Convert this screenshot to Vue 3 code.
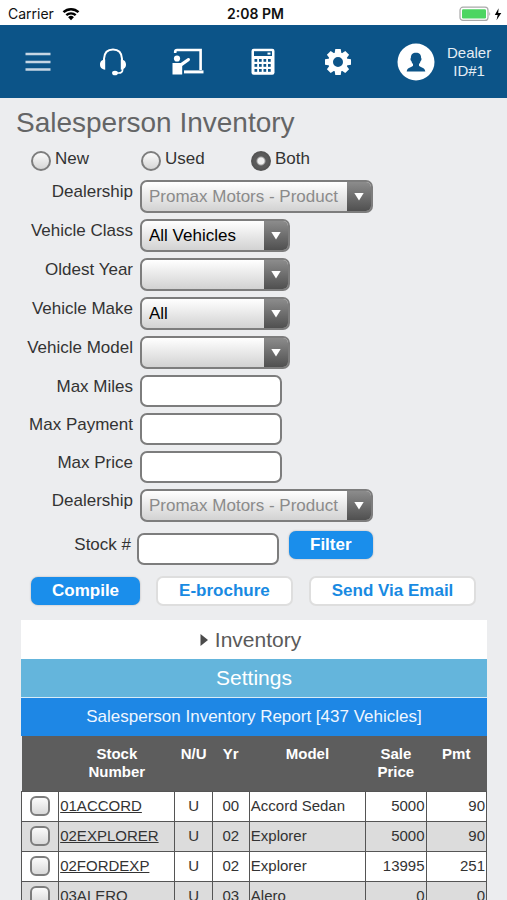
<script setup>
import { ref } from 'vue'

const condition = ref('Both')
const conditions = ['New', 'Used', 'Both']

const fields = [
  { id: 'dealership', label: 'Dealership', type: 'select', value: 'Promax Motors - Product', wide: true, disabled: true },
  { id: 'vehicle-class', label: 'Vehicle Class', type: 'select', value: 'All Vehicles' },
  { id: 'oldest-year', label: 'Oldest Year', type: 'select', value: '' },
  { id: 'vehicle-make', label: 'Vehicle Make', type: 'select', value: 'All' },
  { id: 'vehicle-model', label: 'Vehicle Model', type: 'select', value: '' },
  { id: 'max-miles', label: 'Max Miles', type: 'text' },
  { id: 'max-payment', label: 'Max Payment', type: 'text' },
  { id: 'max-price', label: 'Max Price', type: 'text' },
  { id: 'dealership-filter', label: 'Dealership', type: 'select', value: 'Promax Motors - Product', wide: true, disabled: true },
]

const vehicles = [
  { stock: '01ACCORD', nu: 'U', yr: '00', model: 'Accord Sedan', price: 5000, pmt: 90 },
  { stock: '02EXPLORER', nu: 'U', yr: '02', model: 'Explorer', price: 5000, pmt: 90 },
  { stock: '02FORDEXP', nu: 'U', yr: '02', model: 'Explorer', price: 13995, pmt: 251 },
  { stock: '03ALERO', nu: 'U', yr: '03', model: 'Alero', price: 0, pmt: 0 },
]

const gearTeeth = [0, 45, 90, 135, 180, 225, 270, 315]
const keyColumns = [4, 8.5, 13, 17.5]
const keyRows = [11, 16, 21]
</script>

<template>
  <div class="screen">
    <div class="status">
      <div class="carrier">
        <span>Carrier</span>
        <svg width="18" height="14" viewBox="0 0 18 14" aria-hidden="true">
          <path d="M1.5 5.2a10.8 10.8 0 0 1 15 0" fill="none" stroke="#000" stroke-width="2.5" />
          <path d="M4.3 8.2a6.8 6.8 0 0 1 9.4 0" fill="none" stroke="#000" stroke-width="2.3" />
          <path d="M9 13.2 6.1 10.3a4.1 4.1 0 0 1 5.8 0z" />
        </svg>
      </div>
      <span class="time">2:08 PM</span>
      <div class="power">
        <svg width="44" height="16" viewBox="0 0 44 16" aria-hidden="true">
          <rect x="1" y="1.2" width="28" height="13.2" rx="3" fill="#fff" stroke="#a9a9a9" stroke-width="1.2" />
          <rect x="3" y="3.2" width="24" height="9.2" rx="1.2" fill="#4cd562" />
          <path d="M30.3 5.4q1.8 2.2 0 4.6z" fill="#a9a9a9" />
          <path d="M39.6 2.2 35.8 9h2.9l-1.2 5.2 4.8-7.3h-3.1z" />
        </svg>
      </div>
    </div>

    <nav class="toolbar">
      <button class="tool" type="button" aria-label="Menu">
        <svg width="26" height="20" viewBox="0 0 26 20">
          <path d="M.5 2h25M.5 10h25M.5 17.500h25" stroke="#c6d6e4" stroke-width="2.300" />
        </svg>
      </button>
      <button class="tool" type="button" aria-label="Support">
        <svg width="28" height="28" viewBox="0 0 28 28">
          <path d="M5 13V10.800Q5.500 1.500 14 1.500T23 10.800V13" fill="none" stroke="#fff" stroke-width="2" />
          <path d="M6.200 11.500v10.200C2.500 21.500 1 19.300 1 16.600s1.500-4.900 5.200-5.100zM21.800 11.500v10.200c3.700-.2 5.200-2.400 5.200-5.100s-1.500-4.900-5.200-5.100z" fill="#fff" />
          <path d="M23.600 20v1.400q0 3.600-4 3.600H17" fill="none" stroke="#fff" stroke-width="1.700" />
          <ellipse cx="16" cy="25" rx="2.900" ry="2.300" fill="#fff" />
        </svg>
      </button>
      <button class="tool" type="button" aria-label="Training">
        <svg width="32" height="28" viewBox="0 0 32 28">
          <path d="M3.200 5V3.700Q3.200 2 5 2H28.600V22" fill="none" stroke="#fff" stroke-width="2.600" />
          <circle cx="5" cy="10.500" r="3.100" fill="#fff" />
          <path d="M.5 15h8.200l6.900-4.700q1.500-.8 2.200.4t-.6 2.200l-7 5.200v8.400H.5z" fill="#fff" />
          <path d="M12 22.400h19.500v3H12z" fill="#fff" />
        </svg>
      </button>
      <button class="tool" type="button" aria-label="Calculator">
        <svg width="24" height="28" viewBox="0 0 24 28">
          <rect x=".5" y=".8" width="23" height="26" rx="2.200" fill="#fff" />
          <rect x="3" y="3.200" width="18" height="4.800" fill="#0c5488" />
          <path d="M16.500 4.600h3v2h-3z" fill="#fff" />
          <template v-for="y in keyRows" :key="y">
            <rect v-for="x in keyColumns" :key="x" :x="x - .5" :y="y" width="2.700" height="2.800" fill="#0c5488" />
          </template>
        </svg>
      </button>
      <button class="tool" type="button" aria-label="Settings">
        <svg width="28" height="28" viewBox="-14 -14 28 28">
          <circle r="7.400" fill="none" stroke="#fff" stroke-width="4.800" />
          <path v-for="angle in gearTeeth" :key="angle" d="M-3.500-8-2.700-13h5.400L3.500-8z" fill="#fff" :transform="`rotate(${angle})`" />
        </svg>
      </button>
      <a class="account" href="#account">
        <svg width="38" height="38" viewBox="0 0 38 38" aria-hidden="true">
          <circle cx="19" cy="19" r="18.500" fill="#fff" />
          <path d="M19 9.800c3.300 0 5.200 1.900 5.100 5.200.8.500.4 2.600-.5 3-.3 1.600-1 2.500-1.600 3.100v1.700c1.200 1.700 6 1.700 6.300 5.700H9.700c.3-4 5.100-4 6.300-5.700v-1.700c-.6-.6-1.300-1.500-1.600-3.100-.9-.4-1.300-2.500-.5-3-.1-3.300 1.800-5.200 5.100-5.200z" fill="#0c5488" />
        </svg>
        <span class="dealer">Dealer<br>ID#1</span>
      </a>
    </nav>

    <main class="page">
      <h1>Salesperson Inventory</h1>

      <form @submit.prevent>
        <div class="conditions">
          <label v-for="name in conditions" :key="name" class="condition">
            <input v-model="condition" type="radio" name="condition" :value="name">
            <span>{{ name }}</span>
          </label>
        </div>

        <div class="fields">
          <div v-for="field in fields" :key="field.id" class="field">
            <label :for="field.id">{{ field.label }}</label>
            <div v-if="field.type === 'select'" class="picker" :class="{ wide: field.wide }">
              <select :id="field.id" :disabled="field.disabled">
                <option>{{ field.value }}</option>
              </select>
              <span class="arrow"></span>
            </div>
            <input v-else :id="field.id" class="entry" type="text">
          </div>
        </div>

        <div class="stock">
          <label for="stock-number">Stock #</label>
          <input id="stock-number" class="entry" type="text">
          <button class="action primary filter" type="submit">Filter</button>
        </div>

        <div class="actions">
          <button class="action primary" type="button">Compile</button>
          <button class="action" type="button">E-brochure</button>
          <button class="action" type="button">Send Via Email</button>
        </div>
      </form>

      <section class="report">
        <button class="bar inventory" type="button">
          <svg width="8" height="12" viewBox="0 0 8 12" aria-hidden="true"><path d="M.5 0 8 6 .5 12z" fill="#4b4b4b" /></svg>
          Inventory
        </button>
        <button class="bar settings" type="button">Settings</button>
        <h2>Salesperson Inventory Report [437 Vehicles]</h2>
        <table>
          <colgroup>
            <col class="c-check"><col class="c-text"><col class="c-short"><col class="c-short">
            <col class="c-text"><col class="c-number"><col class="c-number">
          </colgroup>
          <thead>
            <tr>
              <th></th>
              <th>Stock<br>Number</th>
              <th>N/U</th>
              <th>Yr</th>
              <th>Model</th>
              <th>Sale<br>Price</th>
              <th>Pmt</th>
            </tr>
          </thead>
          <tbody>
            <tr v-for="v in vehicles" :key="v.stock">
              <td class="mid"><input type="checkbox" :aria-label="v.stock"></td>
              <td><a :href="'#' + v.stock">{{ v.stock }}</a></td>
              <td class="mid">{{ v.nu }}</td>
              <td class="mid">{{ v.yr }}</td>
              <td>{{ v.model }}</td>
              <td class="num">{{ v.price }}</td>
              <td class="num">{{ v.pmt }}</td>
            </tr>
          </tbody>
        </table>
      </section>
    </main>
  </div>
</template>

<style>
body {
  background: #ecedef;
}
</style>

<style scoped>
.screen {
  display: flex;
  flex-direction: column;
  height: 100vh;
  color: #333;
  background: #ecedef;
  font-family: "Liberation Sans", Arial, sans-serif;
  font-size: 17px;
  line-height: 24px;
}

.screen * {
  box-sizing: border-box;
}

button,
input,
select {
  margin: 0;
  padding: 0;
  border: 0;
  font: inherit;
  appearance: none;
}

svg {
  display: block;
  flex: none;
}

.status {
  display: grid;
  grid-template-columns: 1fr auto 1fr;
  align-items: center;
  flex: none;
  height: 25px;
  padding: 2px 4px 0 8px;
  color: #111;
  background: #fff;
  font-family: Inter, sans-serif;
  font-size: 14px;
}

.carrier {
  display: flex;
  align-items: center;
  gap: 8px;
}

.time {
  font-weight: 600;
}

.power {
  display: flex;
  justify-content: flex-end;
}

.toolbar {
  display: grid;
  grid-template-columns: repeat(5, 75fr) 132fr;
  flex: none;
  height: 73px;
  background: #0c5488;
}

.tool {
  display: flex;
  align-items: center;
  justify-content: center;
  background: none;
}

.account {
  display: flex;
  align-items: center;
  gap: 12px;
  padding-left: 22px;
  color: #e4edf5;
  text-decoration: none;
}

.dealer {
  font-size: 15px;
  line-height: 18px;
  text-align: center;
}

.page {
  flex: 1;
  min-height: 0;
  overflow-y: auto;
  scrollbar-width: none;
}

h1 {
  margin: 0;
  padding-left: 16px;
  color: #646566;
  font-size: 28px;
  font-weight: 400;
  line-height: 49px;
}

.conditions {
  display: flex;
  height: 33px;
  padding-left: 31px;
}

.condition {
  display: flex;
  gap: 4px;
  width: 110px;
}

.condition input {
  width: 20px;
  height: 20px;
  margin-top: 4px;
  border: 2px solid #7d7d7d;
  border-radius: 50%;
  background: linear-gradient(#fafafa, #d6d6d6);
}

.condition input:checked {
  border-color: #555;
  background: radial-gradient(circle, #eee 3px, #5b5b5b 5px);
}

.fields {
  display: flex;
  flex-direction: column;
  gap: 6px;
}

.field {
  display: flex;
  align-items: flex-start;
  gap: 7px;
}

.field label {
  width: 133px;
  text-align: right;
}

.picker {
  display: grid;
  grid-template-columns: 1fr 24px;
  width: 150px;
  height: 33px;
  overflow: hidden;
  border: 2px solid #7d7d7d;
  border-radius: 7px;
  background: linear-gradient(#fff, #d2d2d2);
}

.picker.wide {
  width: 233px;
}

.picker select {
  grid-area: 1 / 1 / 2 / 3;
  padding: 0 24px 0 7px;
  color: #000;
  background: none;
}

.picker select:disabled {
  color: #8b8b8b;
  opacity: 1;
}

.arrow {
  display: grid;
  grid-area: 1 / 2 / 2 / 3;
  place-items: center;
  background: linear-gradient(#8c8c8c, #505050);
  pointer-events: none;
}

.arrow::after {
  width: 10px;
  height: 8px;
  background: #fff;
  clip-path: polygon(0 0, 100% 0, 50% 100%);
  content: "";
}

.entry {
  width: 142px;
  height: 32px;
  padding: 0 8px;
  border: 2px solid #7d7d7d;
  border-radius: 7px;
  background: #fff;
}

.stock {
  display: flex;
  align-items: flex-start;
  gap: 6px;
  margin-top: 11px;
}

.stock label {
  width: 131px;
  text-align: right;
}

.action {
  height: 30px;
  padding: 0 21px;
  border: 2px solid #dedede;
  border-radius: 7px;
  color: #188ae2;
  background: #fff;
  font-weight: 700;
}

.action.primary {
  height: 28px;
  border: 0;
  color: #fff;
  background: #1a8eeb;
  box-shadow: 0 0 2px #aaa;
}

.filter {
  margin: -2px 0 0 4px;
}

.actions {
  display: flex;
  align-items: center;
  gap: 16px;
  margin-top: 11px;
  padding-left: 31px;
}

.report {
  margin: 14px 20px 0 21px;
}

.bar {
  display: flex;
  align-items: center;
  justify-content: center;
  gap: 7px;
  width: 100%;
  height: 39px;
  font-size: 21px;
}

.inventory {
  padding-right: 7px;
  color: #5a5a5a;
  background: #fff;
}

.settings {
  border-bottom: 1px solid #d8ecf8;
  color: #fff;
  background: #64b5dc;
}

h2 {
  margin: 0;
  color: #eef6ff;
  background: #1e87e5;
  font-size: 17px;
  font-weight: 400;
  line-height: 38px;
  text-align: center;
}

table {
  width: 100%;
  border-collapse: collapse;
  table-layout: fixed;
  font-size: 15px;
  line-height: 18px;
}

.c-check,
.c-short {
  width: 8%;
}

.c-text {
  width: 25%;
}

.c-number {
  width: 13%;
}

th {
  height: 55px;
  padding: 9px 0;
  color: #fff;
  background: #5d5d5d;
  vertical-align: top;
}

td {
  height: 30px;
  padding: 0 1px;
  border: 1px solid #555;
  background: #fff;
}

tr:nth-child(even) td {
  background: #dcdcdc;
}

td a {
  color: #333;
}

.mid {
  text-align: center;
}

.num {
  text-align: right;
}

td input {
  display: block;
  width: 20px;
  height: 20px;
  margin: 0 auto;
  border: 2px solid #7d7d7d;
  border-radius: 6px;
  background: linear-gradient(#fbfbfb, #dadada);
}
</style>
